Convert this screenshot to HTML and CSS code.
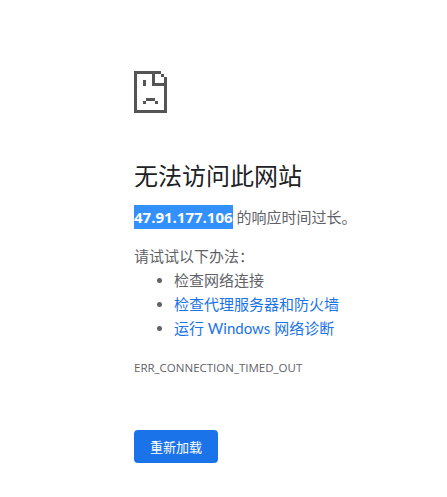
FILE: index.html
```html
<!DOCTYPE html>
<html lang="zh-CN">
<head>
<meta charset="UTF-8">
<title>无法访问此网站</title>
<link rel="stylesheet" href="styles.css">
</head>
<body>
<div class="wrapper">
  <svg class="icon" width="33" height="42" viewBox="0 0 33 42" shape-rendering="crispEdges">
    <path fill="#555" fill-rule="evenodd" d="M0 0H27V3H3V39H30V15H33V42H0Z"/>
    <path fill="#555" d="M18 3H21V12H30V15H18ZM9 9H12V15H9ZM9 30H12V33H9ZM12 27H21V30H12ZM21 30H24V33H21Z"/>
    <path fill="#555" d="M27 3H30V6H27ZM30 6H33V15H30Z"/>
  </svg>
  <h1 class="title">无法访问此网站</h1>
  <p class="summary"><span class="selected">47.91.177.106</span> 的响应时间过长。</p>
  <p class="try">请试试以下办法：</p>
  <ul class="suggestions">
    <li>检查网络连接</li>
    <li><a href="#">检查代理服务器和防火墙</a></li>
    <li><a href="#">运行 Windows 网络诊断</a></li>
  </ul>
  <div class="error-code">ERR_CONNECTION_TIMED_OUT</div>
  <button class="reload">重新加载</button>
</div>
</body>
</html>
```

FILE: styles.css
```css
body {
  margin: 0;
  background: #fff;
  color: #5f6368;
  font-family: Lato, "Noto Sans CJK SC", sans-serif;
  font-size: 15px;
}

.wrapper {
  padding: 71px 0 0 134px;
}

.icon {
  display: block;
}

.title {
  margin: 46px 0 0;
  color: #202124;
  font-size: 24px;
  font-weight: 400;
  line-height: 34px;
}

.summary {
  margin: 12px 0 0;
  line-height: 24px;
}

.selected {
  display: inline-block;
  background: #3390ff;
  color: #fff;
  font-family: "Open Sans", sans-serif;
  font-weight: 700;
}

.try {
  margin: 15px 0 0;
  line-height: 24px;
}

.suggestions {
  margin: 0;
  padding-left: 40px;
}

.suggestions li {
  line-height: 24px;
}

.suggestions a {
  color: #1a73e8;
  text-decoration: none;
}

.error-code {
  margin-top: 16px;
  font-family: "Open Sans", sans-serif;
  font-size: 11.5px;
  line-height: 24px;
}

.reload {
  display: block;
  margin-top: 50px;
  width: 84px;
  height: 33px;
  padding: 0;
  border: none;
  border-radius: 4px;
  background: #1a73e8;
  color: #fff;
  font-family: inherit;
  font-size: 13px;
}
```
